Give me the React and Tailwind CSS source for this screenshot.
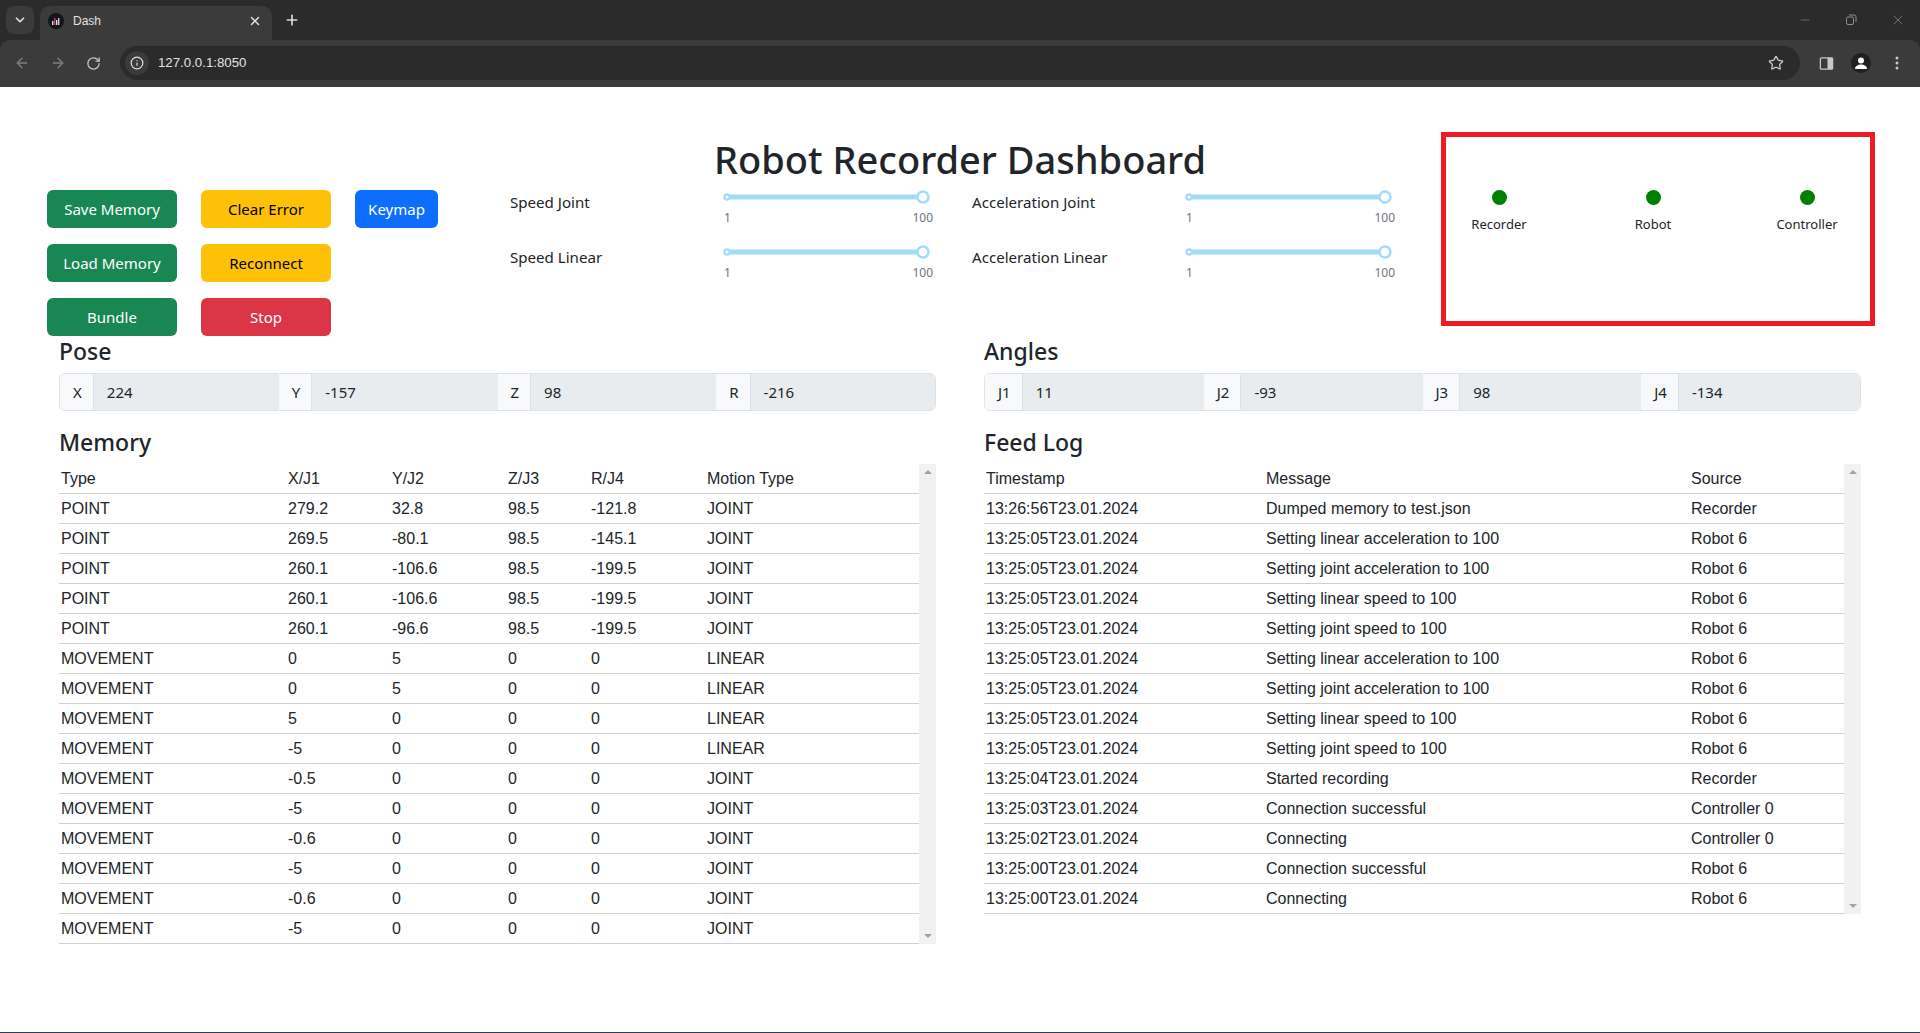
import React from "react";
import { ChevronDown, X, Plus, ArrowLeft, ArrowRight, RotateCw, Info, Star, Minus } from "lucide-react";

const ui = "font-['Noto_Sans',sans-serif]";

const memory = [
  ["POINT","279.2","32.8","98.5","-121.8","JOINT"],
  ["POINT","269.5","-80.1","98.5","-145.1","JOINT"],
  ["POINT","260.1","-106.6","98.5","-199.5","JOINT"],
  ["POINT","260.1","-106.6","98.5","-199.5","JOINT"],
  ["POINT","260.1","-96.6","98.5","-199.5","JOINT"],
  ["MOVEMENT","0","5","0","0","LINEAR"],
  ["MOVEMENT","0","5","0","0","LINEAR"],
  ["MOVEMENT","5","0","0","0","LINEAR"],
  ["MOVEMENT","-5","0","0","0","LINEAR"],
  ["MOVEMENT","-0.5","0","0","0","JOINT"],
  ["MOVEMENT","-5","0","0","0","JOINT"],
  ["MOVEMENT","-0.6","0","0","0","JOINT"],
  ["MOVEMENT","-5","0","0","0","JOINT"],
  ["MOVEMENT","-0.6","0","0","0","JOINT"],
  ["MOVEMENT","-5","0","0","0","JOINT"],
];
const feed = [
  ["13:26:56T23.01.2024","Dumped memory to test.json","Recorder"],
  ["13:25:05T23.01.2024","Setting linear acceleration to 100","Robot 6"],
  ["13:25:05T23.01.2024","Setting joint acceleration to 100","Robot 6"],
  ["13:25:05T23.01.2024","Setting linear speed to 100","Robot 6"],
  ["13:25:05T23.01.2024","Setting joint speed to 100","Robot 6"],
  ["13:25:05T23.01.2024","Setting linear acceleration to 100","Robot 6"],
  ["13:25:05T23.01.2024","Setting joint acceleration to 100","Robot 6"],
  ["13:25:05T23.01.2024","Setting linear speed to 100","Robot 6"],
  ["13:25:05T23.01.2024","Setting joint speed to 100","Robot 6"],
  ["13:25:04T23.01.2024","Started recording","Recorder"],
  ["13:25:03T23.01.2024","Connection successful","Controller 0"],
  ["13:25:02T23.01.2024","Connecting","Controller 0"],
  ["13:25:00T23.01.2024","Connection successful","Robot 6"],
  ["13:25:00T23.01.2024","Connecting","Robot 6"],
];

function Btn({ label, className }) {
  return (
    <button className={`h-[38px] rounded-[6px] text-[15px] ${className}`}>{label}</button>
  );
}

function Slider({ label }) {
  return (
    <div className="flex h-[55px] items-start">
      <div className="w-[217px] pt-[2px] text-[15.1px] leading-[24px] text-[#212529]">{label}</div>
      <div className="w-[196px]">
        <svg width="212" height="16" viewBox="0 0 212 16" className="-ml-[8px] mt-[1px] block">
          <line x1="8" y1="8" x2="204" y2="8" stroke="#a3dcfa" strokeWidth="5" />
          <circle cx="8" cy="8" r="2.600" fill="#fff" stroke="#a3dcfa" strokeWidth="2.200" />
          <circle cx="204" cy="8" r="5.500" fill="#fff" stroke="#a3dcfa" strokeWidth="2.500" />
        </svg>
        <div className="-ml-[4px] mt-[4px] flex w-[210px] justify-between text-[12px] leading-[18px] text-[#6c757d]">
          <span className="pl-[1px]">1</span>
          <span>100</span>
        </div>
      </div>
    </div>
  );
}

function Group({ items }) {
  return (
    <div className="flex h-[38px] w-[877px] overflow-hidden rounded-[6px] border border-[#dee2e6] text-[15px] text-[#212529]">
      {items.map(([k, v]) => (
        <div key={k} className="flex flex-1">
          <div className="flex shrink-0 items-center border-r border-[#dee2e6] bg-[#f8f9fa] pl-[13px] pr-[11px]">{k}</div>
          <div className="flex flex-1 items-center border-r border-[#dee2e6] bg-[#e9ecef] pl-[13px] last:border-r-0">{v}</div>
        </div>
      ))}
    </div>
  );
}

function ScrollTrack() {
  return (
    <div className="flex w-[17px] shrink-0 flex-col items-center justify-between bg-[#f1f1f1] py-[6px]">
      <div className="h-0 w-0 border-x-[4px] border-b-[4px] border-x-transparent border-b-[#a3a3a3]" />
      <div className="h-0 w-0 border-x-[4px] border-t-[4px] border-x-transparent border-t-[#a3a3a3]" />
    </div>
  );
}

function DataTable({ head, rows, widths }) {
  return (
    <div className="flex">
      <table className="w-[860px] table-fixed border-collapse font-['Liberation_Sans',sans-serif] text-[16px] text-[#212529]">
        <colgroup>
          {widths.map((w, i) => <col key={i} className={w} />)}
        </colgroup>
        <thead>
          <tr className="h-[29px] border-b border-[#d0d0d0]">
            {head.map((h) => <th key={h} className="px-[2px] pt-[2px] text-left font-normal">{h}</th>)}
          </tr>
        </thead>
        <tbody>
          {rows.map((r, i) => (
            <tr key={i} className="h-[30px] border-b border-[#d0d0d0]">
              {r.map((c, j) => <td key={j} className="whitespace-nowrap px-[2px] pt-[1px]">{c}</td>)}
            </tr>
          ))}
        </tbody>
      </table>
      <ScrollTrack />
    </div>
  );
}

function Status({ label }) {
  return (
    <div className="flex w-[154px] shrink-0 flex-col items-center">
      <div className="h-[15px] w-[15px] rounded-full bg-[#008000]" />
      <div className="mt-[9px] text-[13px] leading-[20px] text-[#212529]">{label}</div>
    </div>
  );
}

function Chrome() {
  return (
    <div className="bg-[#2b2b2b] font-['Liberation_Sans',sans-serif]">
      <div className="flex h-[40px] items-start pl-[6px]">
        <div className="mt-[6px] flex h-[28px] w-[28px] items-center justify-center rounded-[8px] bg-[#3b3b3b]">
          <ChevronDown size={14} strokeWidth={3} color="#dcdcdc" />
        </div>
        <div className="ml-[6px] mt-[6px] flex h-[34px] w-[232px] items-center rounded-t-[10px] bg-[#3b3b3b] pb-[5px] pl-[8px] pr-[10px]">
          <svg width="16" height="16" viewBox="0 0 16 16" className="shrink-0">
            <circle cx="8" cy="8" r="8" fill="#14141c" />
            <rect x="4" y="8" width="1.400" height="4" fill="#ddd" />
            <rect x="6" y="5" width="1.400" height="7" fill="#d63a6a" />
            <rect x="8" y="7" width="1.400" height="5" fill="#ddd" />
            <rect x="10" y="5" width="1.400" height="7" fill="#c9c9d8" />
          </svg>
          <span className="ml-[9px] flex-1 text-[12px] text-[#e3e3e3]">Dash</span>
          <X size={14} strokeWidth={2.500} color="#e3e3e3" />
        </div>
        <Plus size={16} strokeWidth={2.500} color="#dcdcdc" className="ml-[12px] mt-[12px]" />
        <div className="flex-1" />
        <Minus size={14} strokeWidth={1} color="#8f8f8f" className="mt-[13px]" />
        <svg width="12" height="12" viewBox="0 0 12 12" fill="none" stroke="#8f8f8f" className="ml-[33px] mt-[14px]">
          <rect x="1.500" y="3" width="7" height="7.500" rx="1.500" />
          <path d="M4 1h5a2 2 0 0 1 2 2v5" />
        </svg>
        <X size={16} strokeWidth={1} color="#8f8f8f" className="ml-[33px] mr-[14px] mt-[12px]" />
      </div>
      <div className="flex h-[47px] items-center rounded-t-[10px] bg-[#3b3b3b] pb-[1px] pl-[14px]">
        <ArrowLeft size={16} color="#7f7f7f" strokeWidth={2} />
        <ArrowRight size={16} color="#7f7f7f" strokeWidth={2} className="ml-[20px]" />
        <RotateCw size={15} color="#c8c8c8" strokeWidth={2} className="ml-[20px]" />
        <div className="ml-[19px] flex h-[34px] w-[1680px] items-center rounded-full bg-[#2b2b2b] pl-[5px] pr-[16px]">
          <div className="flex h-[24px] w-[24px] items-center justify-center rounded-full bg-[#3b3b3b]">
            <Info size={14} color="#e3e3e3" strokeWidth={2} />
          </div>
          <span className="ml-[9px] flex-1 text-[13.25px] text-[#e3e3e3]">127.0.0.1:8050</span>
          <Star size={16} color="#c8c8c8" strokeWidth={2} />
        </div>
        <svg width="15" height="15" viewBox="0 0 15 15" className="ml-[19px]">
          <rect x="0.750" y="1.250" width="13.500" height="12.500" rx="1.500" fill="#c8c8c8" />
          <rect x="2" y="2.500" width="6.500" height="10" fill="#3b3b3b" />
        </svg>
        <div className="ml-[17px] flex h-[20px] w-[20px] items-center justify-center rounded-full bg-[#202020]">
          <svg width="14" height="14" viewBox="0 0 14 14" fill="#fff">
            <circle cx="7" cy="4.500" r="3" />
            <path d="M1 13c0-3 3-4.500 6-4.500s6 1.500 6 4.500z" />
          </svg>
        </div>
        <svg width="4" height="14" viewBox="0 0 4 14" fill="#c8c8c8" className="ml-[24px]">
          <circle cx="2" cy="2" r="1.500" />
          <circle cx="2" cy="7" r="1.500" />
          <circle cx="2" cy="12" r="1.500" />
        </svg>
      </div>
    </div>
  );
}

export default function App() {
  return (
    <div className={`flex h-[1033px] w-[1920px] flex-col overflow-hidden bg-white ${ui}`}>
      <Chrome />
      <main className="relative flex-1 border-b border-[#2f3a5f]">
        <div className="flex h-[250px] items-start pl-[47px]">
          <div className="mt-[103px] grid w-[463px] grid-cols-[130px_130px_83px] content-start gap-x-[24px] gap-y-[16px]">
            <Btn label="Save Memory" className="bg-[#198754] text-white" />
            <Btn label="Clear Error" className="bg-[#ffc107] text-black" />
            <Btn label="Keymap" className="bg-[#0d6efd] text-white" />
            <Btn label="Load Memory" className="bg-[#198754] text-white" />
            <Btn label="Reconnect" className="bg-[#ffc107] text-black" />
            <div />
            <Btn label="Bundle" className="bg-[#198754] text-white" />
            <Btn label="Stop" className="bg-[#dc3545] text-white" />
          </div>
          <div className="w-[900px]">
            <h1 className="mt-[48px] text-center text-[38px] font-medium leading-[48px] text-[#212529]">Robot Recorder Dashboard</h1>
            <div className="mt-[5px] flex">
              <div className="w-[462px]">
                <Slider label="Speed Joint" />
                <Slider label="Speed Linear" />
              </div>
              <div>
                <Slider label="Acceleration Joint" />
                <Slider label="Acceleration Linear" />
              </div>
            </div>
          </div>
        </div>

        <div className="absolute left-[1441px] top-[45px] flex h-[194px] w-[434px] items-start border-[5px] border-[#ed1c24] pt-[53px]">
          <div className="-ml-[24px] flex">
            <Status label="Recorder" />
            <Status label="Robot" />
            <Status label="Controller" />
          </div>
        </div>

        <div className="flex gap-[48px] pl-[59px]">
          <section className="w-[877px]">
            <h4 className="h-[36px] text-[23px] font-medium leading-[29px] text-[#212529]">Pose</h4>
            <Group items={[["X","224"],["Y","-157"],["Z","98"],["R","-216"]]} />
            <h4 className="mt-[17px] h-[36px] text-[23px] font-medium leading-[29px] text-[#212529]">Memory</h4>
            <DataTable
              head={["Type","X/J1","Y/J2","Z/J3","R/J4","Motion Type"]}
              rows={memory}
              widths={["w-[227px]","w-[104px]","w-[116px]","w-[83px]","w-[116px]","w-[214px]"]}
            />
          </section>
          <section className="w-[877px]">
            <h4 className="h-[36px] text-[23px] font-medium leading-[29px] text-[#212529]">Angles</h4>
            <Group items={[["J1","11"],["J2","-93"],["J3","98"],["J4","-134"]]} />
            <h4 className="mt-[17px] h-[36px] text-[23px] font-medium leading-[29px] text-[#212529]">Feed Log</h4>
            <DataTable
              head={["Timestamp","Message","Source"]}
              rows={feed}
              widths={["w-[280px]","w-[425px]","w-[155px]"]}
            />
          </section>
        </div>
      </main>
    </div>
  );
}
